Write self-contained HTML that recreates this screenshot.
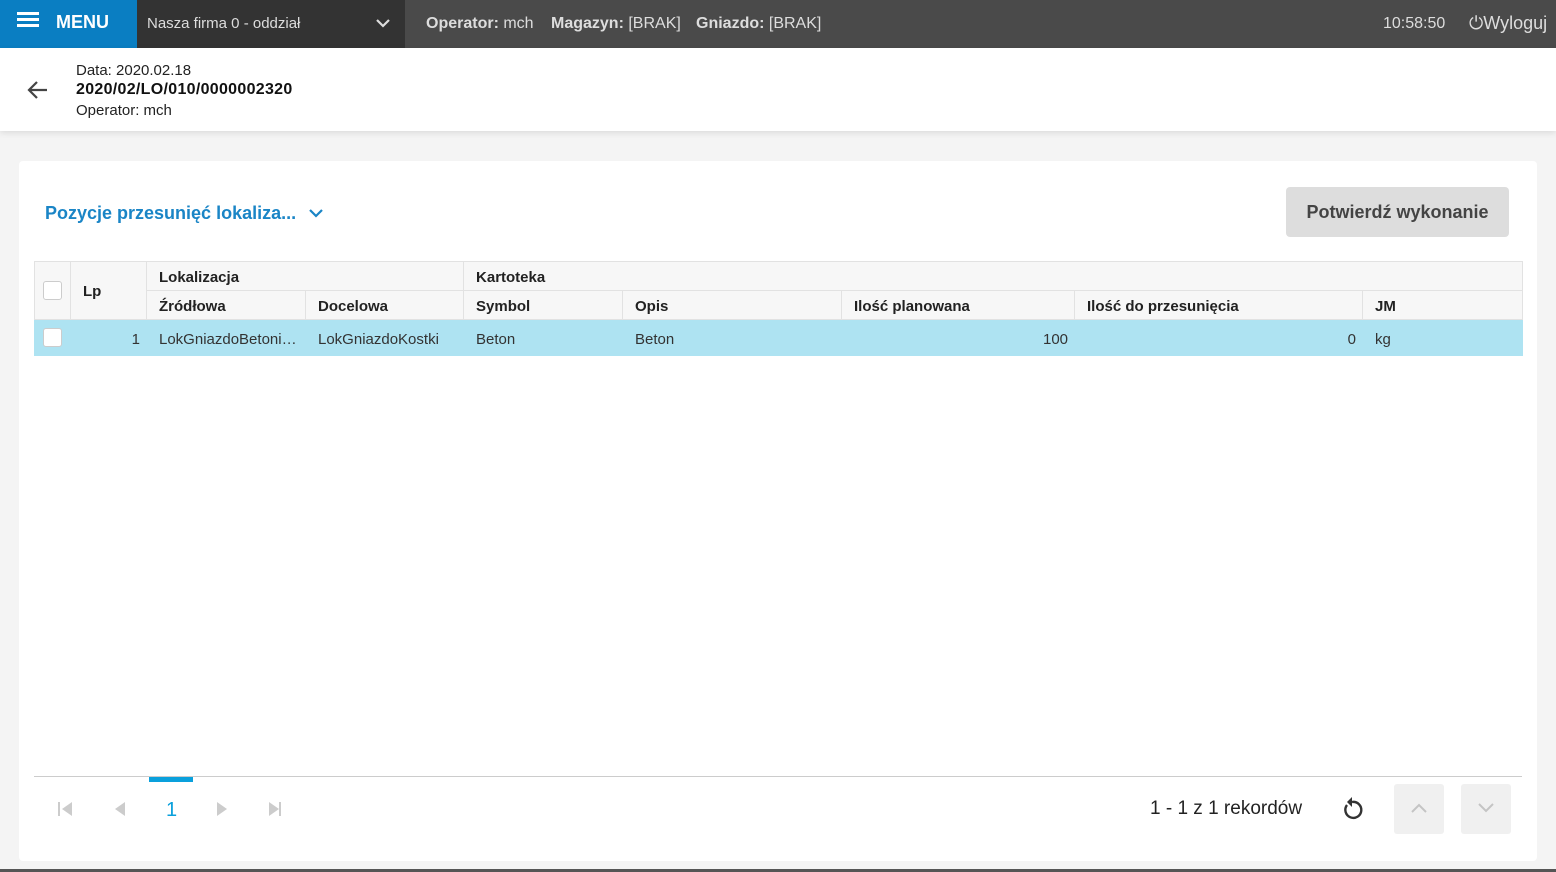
<!DOCTYPE html>
<html><head><meta charset="utf-8"><style>
*{box-sizing:border-box;margin:0;padding:0}
body{width:1556px;height:872px;background:#f4f4f4;font-family:"Liberation Sans",sans-serif;position:relative;overflow:hidden;color:#222}
.abs{position:absolute}
.top{left:0;top:0;width:1556px;height:48px;background:#4a4a4a;color:#ddd;font-size:16px}
.menu{left:0;top:0;width:137px;height:48px;background:#0a7ec2;color:#fff}
.firm{left:137px;top:0;width:268px;height:48px;background:#333}
.hdr{left:0;top:48px;width:1556px;height:83px;background:#fff;box-shadow:0 2px 6px rgba(0,0,0,.1)}
.card{left:19px;top:161px;width:1518px;height:700px;background:#fff;border-radius:4px}
table{border-collapse:collapse;position:absolute;left:34px;top:261px;width:1488px;font-size:15px;table-layout:fixed}
td,th{border:1px solid #e2e2e2;padding:0 12px;text-align:left;white-space:nowrap;overflow:hidden;text-overflow:ellipsis}
th{background:#f7f7f7;font-weight:bold;color:#222;height:29px;padding-top:2px}
tr.d td{background:#aee3f2;height:36px;border-color:#aee3f2;color:#333;padding-top:4px}
.cb{display:inline-block;width:19px;height:19px;border:1px solid #ccc;border-radius:3px;background:#fff;vertical-align:middle}
</style></head><body>
<div class="abs top">
 <span class="abs" style="left:426px;top:15px"><b>Operator:</b> mch</span>
 <span class="abs" style="left:551px;top:15px"><b>Magazyn:</b> [BRAK]</span>
 <span class="abs" style="left:696px;top:15px"><b>Gniazdo:</b> [BRAK]</span>
 <span class="abs" style="left:1383px;top:15px">10:58:50</span>
 <span class="abs" style="left:1469px;top:13px;font-size:18px">⏻Wyloguj</span>
</div>
<div class="abs menu">
 <div class="abs" style="left:17px;top:12px;width:22px;height:3px;background:#fff;box-shadow:0 6px 0 #fff,0 12px 0 #fff"></div>
 <span class="abs" style="left:56px;top:12px;font-size:18px;font-weight:bold">MENU</span>
</div>
<div class="abs firm"><span class="abs" style="left:10px;top:15px;color:#ddd;font-size:15px">Nasza firma 0 - oddział</span>
<svg class="abs" style="left:238px;top:15px" width="16" height="16"><path d="M2 5l6 6 6-6" stroke="#ddd" stroke-width="2.2" fill="none"/></svg></div>
<div class="abs hdr">
 <svg class="abs" style="left:26px;top:32px" width="22" height="20"><path d="M21 10H3M11 2L3 10l8 8" stroke="#444" stroke-width="2.2" fill="none"/></svg>
 <div class="abs" style="left:76px;top:14px;font-size:15px">Data: 2020.02.18</div>
 <div class="abs" style="left:76px;top:33px;font-size:16px;font-weight:bold;color:#111;letter-spacing:0.3px">2020/02/LO/010/0000002320</div>
 <div class="abs" style="left:76px;top:54px;font-size:15px">Operator: mch</div>
</div>
<div class="abs card"></div>
<div class="abs" style="left:45px;top:203px;font-size:18px;font-weight:bold;color:#1a85c6">Pozycje przesunięć lokaliza...</div>
<svg class="abs" style="left:308px;top:206px" width="16" height="14"><path d="M2 4l6 6 6-6" stroke="#1a85c6" stroke-width="2.2" fill="none"/></svg>
<div class="abs" style="left:1286px;top:187px;width:223px;height:50px;background:#ddd;border-radius:4px;font-size:18px;font-weight:bold;color:#444;text-align:center;line-height:51px">Potwierdź wykonanie</div>
<table>
<colgroup><col style="width:36px"><col style="width:76px"><col style="width:159px"><col style="width:158px"><col style="width:159px"><col style="width:219px"><col style="width:233px"><col style="width:288px"><col style="width:160px"></colgroup>
<tr><th rowspan="2" style="padding:0 8px"><span class="cb"></span></th><th rowspan="2">Lp</th><th colspan="2">Lokalizacja</th><th colspan="5">Kartoteka</th></tr>
<tr><th>Źródłowa</th><th>Docelowa</th><th>Symbol</th><th>Opis</th><th>Ilość planowana</th><th>Ilość do przesunięcia</th><th>JM</th></tr>
<tr class="d"><td style="padding:0 8px"><span class="cb"></span></td><td style="text-align:right;padding-right:6px">1</td><td style="padding-right:6px">LokGniazdoBetoniarka</td><td>LokGniazdoKostki</td><td>Beton</td><td>Beton</td><td style="text-align:right;padding-right:6px">100</td><td style="text-align:right;padding-right:6px">0</td><td>kg</td></tr>
</table>
<div class="abs" style="left:34px;top:776px;width:1488px;height:1px;background:#ccc"></div>
<div class="abs" style="left:149px;top:777px;width:44px;height:5px;background:#0aa0dc"></div>
<svg class="abs" style="left:57px;top:801px" width="230" height="16" fill="#ccc">
<rect x="1" y="1" width="2" height="14"/><path d="M15 1v14L5 8z"/>
<path d="M68 1v14L58 8z"/>
<path d="M160 1v14l10-7z"/>
<path d="M212 1v14l10-7z"/><rect x="222" y="1" width="2" height="14"/>
</svg>
<div class="abs" style="left:166px;top:799px;font-size:20px;color:#0aa0dc">1</div>
<div class="abs" style="left:1150px;top:798px;font-size:19px;color:#222">1 - 1 z 1 rekordów</div>
<svg class="abs" style="left:1340px;top:796px" width="24" height="26"><path d="M7 9A8 8 0 1 0 12 6" stroke="#333" stroke-width="2.4" fill="none"/><path d="M12 1l-5 5 5 5z" fill="#333"/></svg>
<div class="abs" style="left:1394px;top:784px;width:50px;height:50px;background:#f0f0f0;border-radius:3px"></div>
<svg class="abs" style="left:1410px;top:802px" width="18" height="12"><path d="M2 10l7-7 7 7" stroke="#c4c4c4" stroke-width="2" fill="none"/></svg>
<div class="abs" style="left:1461px;top:784px;width:50px;height:50px;background:#f0f0f0;border-radius:3px"></div>
<svg class="abs" style="left:1477px;top:802px" width="18" height="12"><path d="M2 2l7 7 7-7" stroke="#c4c4c4" stroke-width="2" fill="none"/></svg>
<div class="abs" style="left:0;top:869px;width:1556px;height:3px;background:#555"></div>
</body></html>
